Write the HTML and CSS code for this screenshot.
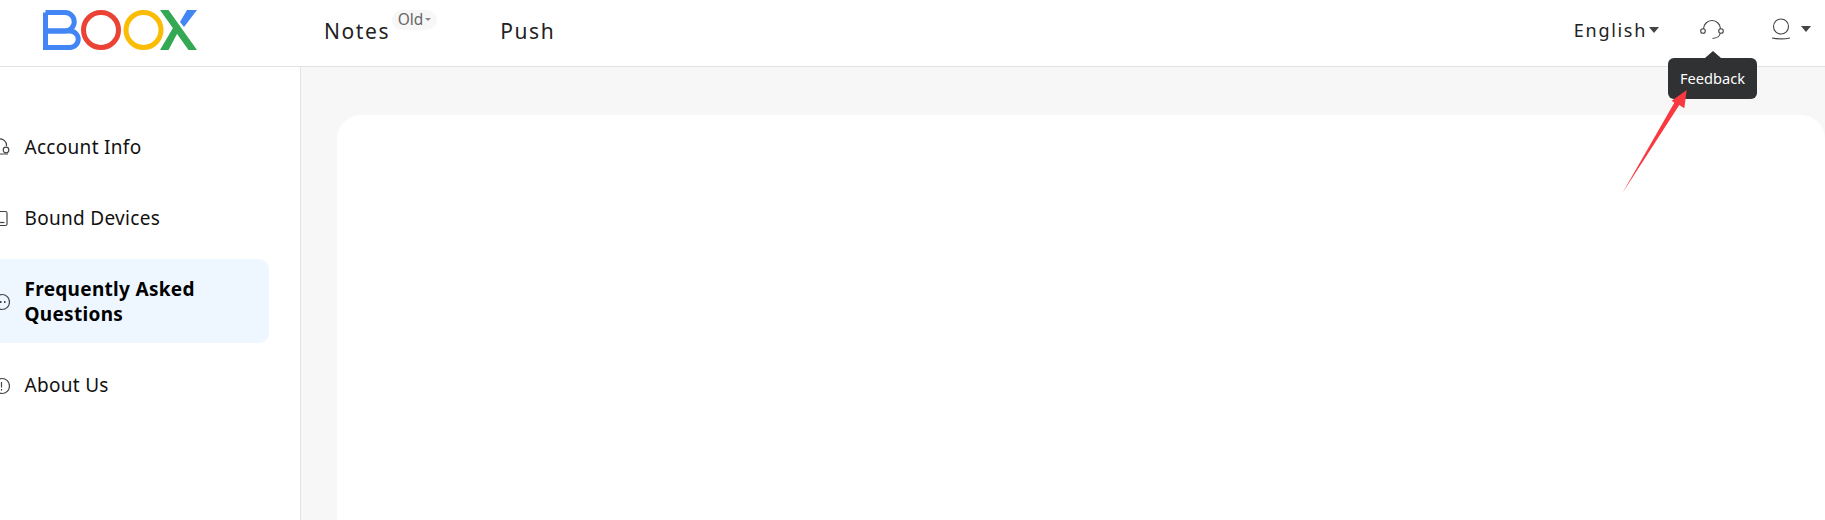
FILE: index.html
```html
<!DOCTYPE html>
<html lang="en">
<head>
<meta charset="utf-8">
<title>BOOX</title>
<link rel="stylesheet" href="styles.css">
</head>
<body>
<div class="page">
  <header class="topbar">
    <svg class="logo" width="154" height="40" viewBox="0 0 154 40" fill="none" aria-label="BOOX">
      <path d="M2.500 2.500H22a9.250 9.250 0 0 1 0 18.500H2.500" stroke="#4285f4" stroke-width="5"/>
      <path d="M2.500 21H27a8.250 8.250 0 0 1 0 16.500H2.500V2.500" stroke="#4285f4" stroke-width="5"/>
      <circle cx="58" cy="20" r="17.500" stroke="#ea4335" stroke-width="5"/>
      <circle cx="100.500" cy="20" r="17.500" stroke="#fbbc05" stroke-width="5"/>
      <path d="M117 0H125.500L154 40H145.500ZM130.500 17L134.500 23L125.500 40H117Z" fill="#34a853"/>
      <path d="M144 0H154L141 17L137 12Z" fill="#4285f4"/>
    </svg>
    <nav class="nav">
      <a class="nav-link">Notes<span class="badge">Old<i class="mini-caret"></i></span></a>
      <a class="nav-link">Push</a>
    </nav>
    <div class="tools">
      <div class="lang">English<i class="caret"></i></div>
      <div class="feedback">
        <svg width="24" height="22" viewBox="0 0 24 22" fill="none" stroke="#444" stroke-width="1.100">
          <path d="M3.500 10V10a8.500 8.500 0 0 1 17 0v0"/>
          <circle cx="3" cy="12" r="2.300"/>
          <circle cx="21" cy="12" r="2.300"/>
          <path d="M20 15C19.500 17.500 16.500 19 12.500 19.500"/>
        </svg>
        <div class="tooltip">Feedback</div>
      </div>
      <div class="user">
        <svg width="20" height="22" viewBox="0 0 20 22" fill="none" stroke="#444" stroke-width="1.100">
          <circle cx="10" cy="8.500" r="7.500"/>
          <path d="M1 20C6 21 14 21 19 20"/>
        </svg>
        <i class="caret"></i>
      </div>
    </div>
  </header>
  <div class="body">
    <aside class="sidebar">
      <ul class="menu">
        <li class="item">
          <svg class="ico" width="20" height="20" viewBox="-10 0 20 20" fill="none" stroke="#444" stroke-width="1.200">
            <path d="M-1 1A6.500 6.500 0 0 1 6.500 8M-2 16H8"/><circle cx="6" cy="12" r="2.800"/>
          </svg>
          <span>Account Info</span>
        </li>
        <li class="item">
          <svg class="ico" width="20" height="20" viewBox="-10 0 20 20" fill="none" stroke="#444" stroke-width="1.200">
            <rect x="-6" y="2.500" width="13" height="14" rx="1.500"/><path d="M0 13.500H4.500"/>
          </svg>
          <span>Bound Devices</span>
        </li>
        <li class="item active">
          <svg class="ico" width="20" height="20" viewBox="-10 0 20 20" fill="none" stroke="#444" stroke-width="1.200">
            <circle cx="2" cy="10" r="7.500"/><path d="M0 10h1.500M4 10h1.500" stroke-width="2"/>
          </svg>
          <span>Frequently Asked Questions</span>
        </li>
        <li class="item">
          <svg class="ico" width="20" height="20" viewBox="-10 0 20 20" fill="none" stroke="#444" stroke-width="1.200">
            <circle cx="2" cy="10" r="7.500"/><path d="M1.500 6v5.500M1.500 13v1.500"/>
          </svg>
          <span>About Us</span>
        </li>
      </ul>
    </aside>
    <main class="content">
      <div class="card"></div>
    </main>
  </div>
  <svg class="annotation" width="72" height="110" viewBox="0 0 72 110">
    <path d="M1.300 108.300L53.300 17.700L50.700 15.700L65.700 5L63.300 23.300L58.300 20Z" fill="#f9393f"/>
  </svg>
</div>
</body>
</html>
```

FILE: styles.css
```css
* { box-sizing: border-box; }
html, body { margin: 0; padding: 0; }
body {
  font-family: "Noto Sans", "Open Sans", Arial, sans-serif;
  color: #111;
  background: #fff;
}
.page {
  position: relative;
  width: 1825px;
  height: 520px;
  overflow: hidden;
  display: flex;
  flex-direction: column;
}
.topbar {
  flex: 0 0 67px;
  height: 67px;
  display: flex;
  align-items: flex-start;
  padding-left: 43px;
  border-bottom: 1px solid #e3e3e3;
}
.logo { margin-top: 10px; flex: none; }
.nav {
  display: flex;
  margin-left: 127px;
  padding-top: 16px;
  gap: 110px;
}
.nav-link {
  position: relative;
  font-size: 21px;
  line-height: 30px;
  letter-spacing: 1.600px;
  color: #222;
}
.badge {
  position: absolute;
  left: 68px;
  top: -6px;
  width: 45px;
  height: 20px;
  display: flex;
  align-items: center;
  justify-content: center;
  gap: 2px;
  padding-bottom: 2px;
  background: #f7f7f7;
  border-radius: 10px;
  font-size: 15.500px;
  letter-spacing: 0;
  line-height: 20px;
  color: #666;
}
.mini-caret {
  width: 0;
  height: 0;
  border: 3px solid transparent;
  border-top: 3px solid #888;
  border-bottom: 0;
}
.tools {
  margin-left: auto;
  display: flex;
  align-items: flex-start;
  padding-right: 14px;
}
.lang {
  display: flex;
  align-items: center;
  gap: 2px;
  margin-top: 15px;
  font-size: 18px;
  line-height: 30px;
  letter-spacing: 1.700px;
  color: #222;
}
.caret {
  display: block;
  width: 0;
  height: 0;
  border: 5.500px solid transparent;
  border-top: 6px solid #444;
  border-bottom: 0;
}
.feedback {
  position: relative;
  margin-left: 41px;
  margin-top: 19px;
  width: 24px;
  height: 22px;
}
.tooltip {
  position: absolute;
  left: -32px;
  top: 39px;
  width: 89px;
  height: 41px;
  display: flex;
  align-items: center;
  justify-content: center;
  padding-bottom: 2px;
  background: #303133;
  border-radius: 6px;
  color: #fff;
  font-size: 14.600px;
}
.tooltip::before {
  content: "";
  position: absolute;
  left: 36.500px;
  top: -7px;
  border: 8px solid transparent;
  border-bottom: 7px solid #303133;
  border-top: 0;
}
.user {
  display: flex;
  align-items: center;
  gap: 10px;
  margin-left: 47px;
  margin-top: 18px;
}
.body { flex: 1; display: flex; min-height: 0; }
.sidebar {
  flex: 0 0 301px;
  border-right: 1px solid #e3e3e3;
  padding-top: 50px;
}
.menu {
  list-style: none;
  margin: 0 31px 0 -10px;
  padding: 0;
  display: flex;
  flex-direction: column;
  gap: 12px;
}
.item {
  display: flex;
  align-items: center;
  gap: 14.500px;
  padding: 18px 20px 16px 0;
  font-size: 19px;
  letter-spacing: 0.300px;
  line-height: 25px;
  border-radius: 10px;
  color: #111;
}
.ico { flex: none; }
.item.active {
  background: #eef7ff;
  font-weight: 700;
  color: #000;
}
.content {
  flex: 1;
  background: #f7f7f7;
  padding: 48px 0 0 36px;
  min-width: 0;
}
.card {
  height: 600px;
  background: #fff;
  border-radius: 24px;
}
.annotation {
  position: absolute;
  left: 1621px;
  top: 85px;
}
```
